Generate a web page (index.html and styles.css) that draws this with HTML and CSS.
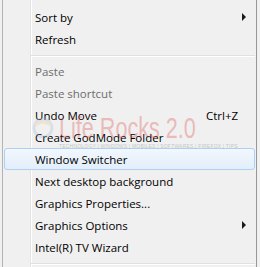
FILE: index.html
```html
<!DOCTYPE html>
<html lang="en">

<head>
      <meta charset="UTF-8">
      <meta name="viewport" content="width=device-width, initial-scale=1.0">
      <title>Desktop menu</title>
      <link rel="stylesheet" href="styles.css">
</head>

<body>
      <div class="menu">
            <div class="item">Sort by<span class="arrow"></span></div>
            <div class="item">Refresh</div>
            <div class="sep"></div>
            <div class="item off">Paste</div>
            <div class="item off">Paste shortcut</div>
            <div class="item">Undo Move<span class="key">Ctrl+Z</span></div>
            <div class="item">Create GodMode Folder</div>
            <div class="item hot">Window Switcher</div>
            <div class="item">Next desktop background</div>
            <div class="item">Graphics Properties...</div>
            <div class="item">Graphics Options<span class="arrow"></span></div>
            <div class="item">Intel(R) TV Wizard</div>
            <div class="sep"></div>

            <!-- faint watermark over the screenshot -->
            <div class="mark">
                  <svg class="globe" width="22" height="22" viewBox="0 0 22 22">
                        <circle cx="11" cy="11" r="9" fill="none" stroke="#9cb6d8" stroke-width="3" />
                        <path d="M3 8 Q11 2 19 8" fill="none" stroke="#e6c27a" stroke-width="3" />
                  </svg>
                  <div class="mark-text">
                        <div class="mark-title">Life Rocks 2.0</div>
                        <div class="mark-sub">TECHNOLOGY | WINDOWS | MOBILES | SOFTWARES | FIREFOX | TIPS</div>
                  </div>
            </div>
      </div>
</body>

</html>
```

FILE: styles.css
```css
body {
      margin: 0;
      background-color: #f0f0f0;
      font-family: "Open Sans", "Noto Sans", sans-serif;
      font-size: 11.5px;
      color: #000;
}

.menu {
      position: relative;
      margin-left: 2px;
      width: 255px;
      height: 267px;
      box-sizing: border-box;
      padding-top: 6px;
      border-left: 1px solid #b4b4b4;
      border-right: 1px solid #979797;
      background-color: #f0f0f0;
      background-image: linear-gradient(to right, transparent 27px, #e2e3e3 27px, #e2e3e3 28px, #fff 28px, #fff 29px, transparent 29px);
      overflow: hidden;
}

.item {
      display: flex;
      align-items: center;
      height: 22px;
      box-sizing: border-box;
      padding-left: 32px;
      white-space: nowrap;
}

.item.off {
      color: #6d6d6d;
}

.item.hot {
      margin: 0 1px;
      padding-left: 30px;
      border: 1px solid #aecff7;
      border-radius: 3px;
      background: linear-gradient(to bottom, #f2f7fd, #e2eefb);
}

.key {
      margin-left: auto;
      width: 50px;
}

.arrow {
      margin-left: auto;
      margin-right: 10px;
      width: 0;
      height: 0;
      border-left: 4px solid #1a1a1a;
      border-top: 4px solid transparent;
      border-bottom: 4px solid transparent;
}

.sep {
      height: 0;
      margin: 5px 1px 3px 28px;
      border-top: 1px solid #e0e0e0;
      border-bottom: 1px solid #fff;
}

.mark {
      position: absolute;
      left: 29px;
      top: 113px;
      display: flex;
      align-items: flex-start;
      gap: 5px;
      opacity: 0.28;
      pointer-events: none;
}

.globe {
      margin-top: 4px;
}

.mark-title {
      font-family: "Liberation Sans", Arial, sans-serif;
      font-size: 30px;
      line-height: 30px;
      color: #d83030;
      transform: scaleX(0.72);
      transform-origin: left;
      white-space: nowrap;
}

.mark-sub {
      font-family: "Liberation Sans", Arial, sans-serif;
      font-size: 5px;
      letter-spacing: 0.2px;
      color: #555;
      white-space: nowrap;
}
```
